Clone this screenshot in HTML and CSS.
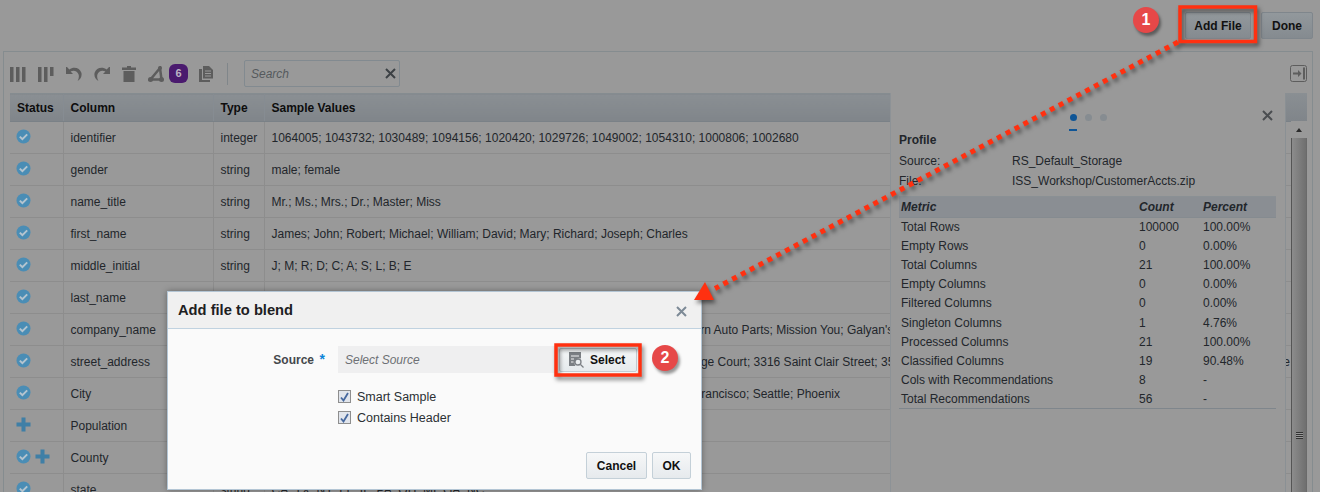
FILE: index.html
```html
<!DOCTYPE html>
<html>
  <head>
    <meta charset="UTF-8" />
    <meta name="viewport" content="width=device-width, initial-scale=1.0" />
    <title>Add file to blend</title>
    <link rel="stylesheet" href="styles.css">
  </head>
  <body>
    <svg class="defs" width="0" height="0">
      <symbol id="check" viewBox="0 0 15 15">
        <circle cx="7.5" cy="7.5" r="7" fill="#4a8db5" />
        <path d="M3.8 7.6l2.6 2.6 4.8-4.8" fill="none" stroke="#b4c4cf" stroke-width="2" />
      </symbol>
      <symbol id="plus" viewBox="0 0 15 15">
        <path d="M5.5 0.5h4v5h5v4h-5v5h-4v-5h-5v-4h5z" fill="#3f7fa6" />
      </symbol>
      <symbol id="cross" viewBox="0 0 11 11">
        <path d="M1 1l9 9M10 1l-9 9" fill="none" stroke="currentColor" stroke-width="2" />
      </symbol>
    </svg>

    <header class="topbar">
      <button class="btn btn-add">Add File</button>
      <button class="btn btn-done">Done</button>
    </header>

    <section class="panel">
      <div class="toolbar">
        <svg class="tool tool-first" width="16" height="16" viewBox="0 0 16 16"><path d="M0 1h3.5v15H0zM6 1h3.5v15H6zM12 1h3.5v15H12z" /></svg>
        <svg class="tool" width="16" height="16" viewBox="0 0 16 16"><path d="M0 1h3.5v15H0zM6 1h3.5v15H6zM12 1h3.5v9H12z" /></svg>
        <svg class="tool" width="16" height="16" viewBox="0 0 16 16"><path d="M0 1v7h7L4.6 5.6C7.5 3.8 11.5 5 12.6 8.5c.6 2 .2 4.500-1 6.500 3-1.500 4.600-5 3.800-8.200C14 2 8 0 3.300 3.400L1 1z" /></svg>
        <svg class="tool" width="16" height="16" viewBox="0 0 16 16"><path d="M16 1v7H9l2.400-2.400C8.500 3.800 4.500 5 3.400 8.500c-.6 2-.2 4.500 1 6.500-3-1.500-4.600-5-3.800-8.200C2 2 8 0 12.700 3.400L15 1z" /></svg>
        <svg class="tool" width="14" height="16" viewBox="0 0 14 16"><path d="M5 0h4v1.500h5v2.500H0V1.500h5zM1.500 5h11v11h-11z" /></svg>
        <svg class="tool tool-angle" width="16" height="16" viewBox="0 0 16 16"><path d="M12 2L2.500 13.500h11z" fill="none" stroke="#5d5d5d" stroke-width="2.500" /><circle cx="2.500" cy="13.500" r="2.500" /><circle cx="13.500" cy="13.500" r="2.500" /><circle cx="12" cy="2" r="2" /></svg>
        <span class="count">6</span>
        <svg class="tool tool-copy" width="14" height="16" viewBox="0 0 14 16"><path d="M4 0h6l4 4v8.500H4zM0 3h3v11h8v2H0z" /><path d="M6 5h6M6 7.500h6M6 10h6" stroke="#999" /></svg>
        <span class="separator"></span>
        <div class="search">
          <span class="search-text">Search</span>
          <svg class="search-clear" width="11" height="11"><use href="#cross" /></svg>
        </div>
        <svg class="collapse" width="17" height="17" viewBox="0 0 17 17"><rect x="0.500" y="0.500" width="16" height="16" rx="2" fill="none" stroke="#5d5d5d" /><path d="M3 7.500h5V5l3.500 3.500L8 12V9.500H3z" fill="#5d5d5d" /><path d="M13 2.500h2v12h-2z" fill="#5d5d5d" /></svg>
      </div>

      <div class="grid-wrap">
        <div class="grid-clip">
          <table class="grid">
            <thead>
              <tr><th class="c-status">Status</th><th class="c-name">Column</th><th class="c-type">Type</th><th class="c-sample">Sample Values</th><th class="c-rest"></th></tr>
            </thead>
            <tbody>
              <tr><td class="st"><svg width="15" height="15"><use href="#check" /></svg></td><td>identifier</td><td>integer</td><td>1064005; 1043732; 1030489; 1094156; 1020420; 1029726; 1049002; 1054310; 1000806; 1002680</td><td class="rest"></td></tr>
              <tr><td class="st"><svg width="15" height="15"><use href="#check" /></svg></td><td>gender</td><td>string</td><td>male; female</td><td class="rest"></td></tr>
              <tr><td class="st"><svg width="15" height="15"><use href="#check" /></svg></td><td>name_title</td><td>string</td><td>Mr.; Ms.; Mrs.; Dr.; Master; Miss</td><td class="rest"></td></tr>
              <tr><td class="st"><svg width="15" height="15"><use href="#check" /></svg></td><td>first_name</td><td>string</td><td>James; John; Robert; Michael; William; David; Mary; Richard; Joseph; Charles</td><td class="rest"></td></tr>
              <tr><td class="st"><svg width="15" height="15"><use href="#check" /></svg></td><td>middle_initial</td><td>string</td><td>J; M; R; D; C; A; S; L; B; E</td><td class="rest"></td></tr>
              <tr><td class="st"><svg width="15" height="15"><use href="#check" /></svg></td><td>last_name</td><td>string</td><td>Smith; Johnson; Williams; Jones; Brown; Davis; Miller; Wilson; Moore; Taylor</td><td class="rest"></td></tr>
              <tr><td class="st"><svg width="15" height="15"><use href="#check" /></svg></td><td>company_name</td><td>string</td><td>Sears Hometown; Bed Bath Inc.; Ace Hardware; Whole Foods; Pep Boys; Western Auto Parts; Mission You; Galyan's; Hechinger</td><td class="rest"></td></tr>
              <tr><td class="st"><svg width="15" height="15"><use href="#check" /></svg></td><td>street_address</td><td>string</td><td>4421 Lawton Avenue; 1882 Oak Park Drive; 2209 Ridge Road; 718 Sunset Cottage Court; 3316 Saint Clair Street; 3540 Woodland Terrace</td><td class="rest">e</td></tr>
              <tr><td class="st"><svg width="15" height="15"><use href="#check" /></svg></td><td>City</td><td>string</td><td>New York; Los Angeles; Chicago; Houston; Dallas; Boston; Waco; Denver; San Francisco; Seattle; Phoenix</td><td class="rest"></td></tr>
              <tr><td class="st"><svg width="15" height="15"><use href="#plus" /></svg></td><td>Population</td><td>integer</td><td>8175133; 3792621; 2695598</td><td class="rest"></td></tr>
              <tr><td class="st"><svg width="15" height="15"><use href="#check" /></svg><svg class="st-plus" width="15" height="15"><use href="#plus" /></svg></td><td>County</td><td>string</td><td>Kings; Queens; Cook; Harris</td><td class="rest"></td></tr>
              <tr><td class="st"><svg width="15" height="15"><use href="#check" /></svg></td><td>state</td><td>string</td><td>CA; TX; NY; FL; IL; PA; OH; MI; GA; NC</td><td class="rest"></td></tr>
            </tbody>
          </table>
        </div>

        <div class="scrollbar">
          <div class="scroll-head"></div>
          <span class="scroll-up"></span>
          <div class="scroll-thumb"><span class="grip"></span></div>
        </div>

        <aside class="profile">
          <div class="dots">
            <span class="dot dot-on"></span><span class="dot"></span><span class="dot"></span>
          </div>
          <span class="dot-mark"></span>
          <svg class="profile-close" width="11" height="11"><use href="#cross" /></svg>
          <h3>Profile</h3>
          <div class="meta"><span>Source:</span><span>RS_Default_Storage</span></div>
          <div class="meta"><span>File:</span><span>ISS_Workshop/CustomerAccts.zip</span></div>
          <table class="metrics">
            <thead><tr><th>Metric</th><th>Count</th><th>Percent</th></tr></thead>
            <tbody>
              <tr><td>Total Rows</td><td>100000</td><td>100.00%</td></tr>
              <tr><td>Empty Rows</td><td>0</td><td>0.00%</td></tr>
              <tr><td>Total Columns</td><td>21</td><td>100.00%</td></tr>
              <tr><td>Empty Columns</td><td>0</td><td>0.00%</td></tr>
              <tr><td>Filtered Columns</td><td>0</td><td>0.00%</td></tr>
              <tr><td>Singleton Columns</td><td>1</td><td>4.76%</td></tr>
              <tr><td>Processed Columns</td><td>21</td><td>100.00%</td></tr>
              <tr><td>Classified Columns</td><td>19</td><td>90.48%</td></tr>
              <tr><td>Cols with Recommendations</td><td>8</td><td>-</td></tr>
              <tr><td>Total Recommendations</td><td>56</td><td>-</td></tr>
            </tbody>
          </table>
        </aside>
      </div>
    </section>

    <div class="dialog">
      <div class="dialog-head">
        <h2>Add file to blend</h2>
        <svg class="dialog-close" width="11" height="11"><use href="#cross" /></svg>
      </div>
      <div class="dialog-body">
        <div class="source-row">
          <span class="source-label">Source</span>
          <span class="required">*</span>
          <div class="source-input">
            <span>Select Source</span>
            <button class="btn-select">
              <svg width="15" height="16" viewBox="0 0 15 16"><path d="M0 0h12v6.500a5 5 0 0 0-5.500 7.500H0z" fill="#7b7f84" /><path d="M2 4h8M2 7h3M2 10h2.500" stroke="#f2f2f2" /><circle cx="9" cy="10" r="3" fill="none" stroke="#7b7f84" stroke-width="1.300" /><path d="M11.500 12.500l3 3" stroke="#7b7f84" stroke-width="1.300" /></svg>
              Select
            </button>
          </div>
        </div>
        <label class="check-row"><span class="checkbox"><svg width="9" height="10" viewBox="0 0 9 10"><path d="M1 5.500l2.500 3L8 1" fill="none" stroke="#46689e" stroke-width="1.800" /></svg></span>Smart Sample</label>
        <label class="check-row"><span class="checkbox"><svg width="9" height="10" viewBox="0 0 9 10"><path d="M1 5.500l2.500 3L8 1" fill="none" stroke="#46689e" stroke-width="1.800" /></svg></span>Contains Header</label>
      </div>
      <div class="dialog-foot">
        <button class="btn-light btn-cancel">Cancel</button>
        <button class="btn-light btn-ok">OK</button>
      </div>
    </div>

    <!-- callouts drawn over the screenshot -->
    <svg class="callouts" width="1320" height="492">
      <g class="shadowed">
        <path d="M1178 42L715 288.500" fill="none" stroke="#ff3010" stroke-width="5" stroke-dasharray="5 5" />
        <path d="M705 282L714 300H694z" fill="#ff3010" />
        <rect x="1180" y="7" width="75.500" height="34.500" fill="none" stroke="#ff3010" stroke-width="3.500" />
        <rect x="556" y="345" width="84" height="30" fill="none" stroke="#ff3010" stroke-width="3.500" />
      </g>
    </svg>
    <span class="step step-1">1</span>
    <span class="step step-2">2</span>
  </body>
</html>
```

FILE: styles.css
```css
* {
  box-sizing: border-box;
  margin: 0;
  padding: 0;
}

html,
body {
  height: 492px;
  overflow: hidden;
}

body {
  position: relative;
  background-color: #999;
  color: #22262b;
  font-family: "Liberation Sans", Arial, sans-serif;
  font-size: 12px;
}

.defs {
  position: absolute;
}

button {
  font-family: inherit;
}

/* top bar */
.topbar {
  display: flex;
  justify-content: flex-end;
  gap: 10px;
  height: 51px;
  padding: 12px 7px 0 0;
}

.btn {
  height: 27px;
  border: 1px solid #7f868c;
  border-radius: 2px;
  background: linear-gradient(#92989c, #858b90);
  color: #111;
  font-size: 12px;
  font-weight: bold;
}

.btn-add {
  width: 66px;
}

.btn-done {
  width: 52px;
}

/* main panel */
.panel {
  margin: 0 7px 0 3px;
  height: 441px;
  padding: 0 5px 0 6px;
  border: 1px solid #858c8f;
  border-bottom: none;
}

.toolbar {
  display: flex;
  align-items: center;
  height: 41px;
  padding-top: 2px;
}

.tool {
  fill: #5d5d5d;
  margin-right: 12px;
}

.tool-angle {
  margin-right: 5px;
}

.count {
  width: 19px;
  height: 19px;
  margin-right: 11px;
  border-radius: 6px;
  background-color: #4a1a6e;
  color: #bcb4c4;
  font-size: 11px;
  font-weight: bold;
  line-height: 19px;
  text-align: center;
}

.tool-copy {
  margin-right: 0;
}

.separator {
  width: 1px;
  height: 22px;
  margin: 0 16px 0 14px;
  background-color: #80868a;
}

.search {
  display: flex;
  align-items: center;
  justify-content: space-between;
  width: 156px;
  height: 27px;
  padding: 0 3px 0 6px;
  border: 1px solid #828a90;
  border-radius: 2px;
  color: #55595d;
  font-style: italic;
}

.search-clear {
  color: #3c4145;
}

.collapse {
  margin-left: auto;
}

.grid-wrap {
  position: relative;
  height: 399px;
}

.grid-clip {
  width: 1281px;
  height: 399px;
  overflow: hidden;
}

.grid {
  width: 1281px;
  table-layout: fixed;
  border-collapse: collapse;
}

.grid th {
  height: 28px;
  padding: 0 7px;
  border-top: 1px solid #858c90;
  border-bottom: 1px solid #7a8187;
  border-left: 1px solid #868c92;
  background: linear-gradient(#8a8f93, #80858a);
  color: #0d0d0d;
  font-weight: bold;
  text-align: left;
}

.grid th:first-child,
.grid td:first-child {
  border-left: none;
}

.c-status {
  width: 53px;
}

.c-name {
  width: 150px;
}

.c-type {
  width: 51px;
}

.c-sample {
  width: 626px;
}

.grid .c-rest {
  border-left: none;
}

.grid td {
  height: 32px;
  padding: 0 7px;
  border-bottom: 1px solid #8d8d8d;
  border-left: 1px solid #8d8d8d;
  white-space: nowrap;
  overflow: hidden;
}

.grid .rest {
  padding: 0 1px 0 0;
  border-left: none;
  text-align: right;
}

.grid .st {
  padding: 0 0 3px 6px;
}

.grid .st svg {
  display: inline-block;
  vertical-align: middle;
}

.st-plus {
  margin-left: 4px;
}

/* scrollbar */
.scrollbar {
  position: absolute;
  top: 0;
  right: 0;
  width: 22px;
  height: 399px;
  padding-left: 6px;
  overflow: hidden;
}

.scroll-head {
  height: 28px;
  margin-left: -6px;
  background: linear-gradient(#8a8f93, #80858a);
}

.scroll-up {
  display: block;
  width: 0;
  height: 0;
  margin: 7px auto 0;
  border: 3px solid transparent;
  border-top: none;
  border-bottom: 4px solid #2c2c2c;
}

.scroll-thumb {
  display: flex;
  align-items: center;
  justify-content: center;
  height: 594px;
  margin-top: 6px;
  border-left: 1px solid #555;
  border-right: 1px solid #6a6a6a;
  background: linear-gradient(90deg, #8c8c8c, #6f6f6f);
}

.grip {
  width: 7px;
  height: 7px;
  border-top: 1px solid #333;
  border-bottom: 1px solid #333;
  background: linear-gradient(#999 1px, #333 1px, #333 2px, #999 2px, #999 3px, #333 3px, #333 4px, #999 4px);
}

/* profile popup */
.profile {
  position: absolute;
  top: 0;
  left: 880px;
  width: 396px;
  height: 399px;
  padding: 37px 9px 0 8px;
  border-left: 1px solid #8d9296;
  border-right: 1px solid #8a9094;
  background-color: #999;
}

.dots {
  display: flex;
  justify-content: center;
  gap: 8px;
  position: absolute;
  top: 21px;
  left: 179px;
}

.dot {
  width: 7px;
  height: 7px;
  border-radius: 50%;
  background-color: #868c91;
}

.dot-on {
  background-color: #0f5596;
}

.dot-mark {
  position: absolute;
  top: 36px;
  left: 178px;
  width: 8px;
  height: 2px;
  background-color: #0f5596;
}

.profile-close {
  position: absolute;
  top: 17px;
  right: 12px;
  color: #4a4d50;
}

.profile h3 {
  height: 21px;
  font-size: 12px;
  font-weight: bold;
  line-height: 20px;
}

.meta {
  display: grid;
  grid-template-columns: 113px 1fr;
  height: 20px;
  line-height: 20px;
}

.metrics {
  width: 377px;
  margin-top: 5px;
  table-layout: fixed;
  border-collapse: collapse;
  border-bottom: 1px solid #7f868c;
}

.metrics th {
  height: 21px;
  padding: 0 2px;
  border-top: 1px solid #8a9094;
  border-bottom: 1px solid #858b90;
  background-color: #8a8e93;
  font-style: italic;
  text-align: left;
}

.metrics td {
  height: 19.100px;
  padding: 0 2px;
}

.metrics th:nth-child(1) {
  width: 238px;
}

.metrics th:nth-child(2) {
  width: 64px;
}

/* dialog */
.dialog {
  position: absolute;
  top: 291px;
  left: 167px;
  display: flex;
  flex-direction: column;
  width: 535px;
  height: 199px;
  border: 1px solid #b3c5d4;
  background-color: #fafafa;
  box-shadow: 0 0 6px rgba(0, 0, 0, 0.35);
  color: #26292c;
}

.dialog-head {
  display: flex;
  align-items: center;
  justify-content: space-between;
  height: 37px;
  padding: 0 14px 0 10px;
  border-bottom: 1px solid #c0d2e0;
  background-color: #f0f0f0;
}

.dialog-head h2 {
  color: #1d2022;
  font-size: 14.700px;
  font-weight: bold;
}

.dialog-close {
  margin-top: 2px;
  color: #7d8a96;
}

.dialog-body {
  flex: 1;
  padding: 17px 0 0 170px;
}

.source-row {
  position: relative;
  margin-bottom: 13px;
}

.source-label {
  position: absolute;
  top: 7px;
  right: 100%;
  margin-right: 24px;
  color: #44484c;
  font-weight: bold;
}

.required {
  position: absolute;
  top: 5px;
  right: 100%;
  margin-right: 13px;
  color: #0a84d8;
  font-size: 14px;
  font-weight: bold;
}

.source-input {
  display: flex;
  align-items: center;
  justify-content: space-between;
  width: 300px;
  height: 27px;
  padding: 0 0 0 7px;
  color: #6d7074;
  font-style: italic;
  background: linear-gradient(90deg, #efeff0 217px, transparent 217px);
}

.btn-select {
  display: flex;
  align-items: center;
  gap: 6px;
  width: 78px;
  height: 24px;
  margin-right: 1px;
  padding-left: 9px;
  border: 1px solid #c4ced6;
  border-radius: 2px;
  background: linear-gradient(#f4f6f7, #e6eaed);
  color: #111;
  font-size: 12px;
  font-weight: bold;
}

.check-row {
  display: flex;
  align-items: center;
  gap: 6px;
  height: 21px;
  color: #2b3034;
  font-size: 12.500px;
}

.checkbox {
  display: flex;
  align-items: center;
  justify-content: center;
  width: 13px;
  height: 13px;
  border: 1px solid #8e8e8e;
  background-color: #e1e5ec;
}

.dialog-foot {
  display: flex;
  justify-content: flex-end;
  gap: 5px;
  padding: 0 10px 10px 0;
}

.btn-light {
  height: 27px;
  border: 1px solid #c4d0d8;
  border-radius: 2px;
  background: linear-gradient(#f6f7f8, #e6eaed);
  color: #111;
  font-size: 12px;
  font-weight: bold;
}

.btn-cancel {
  width: 61px;
}

.btn-ok {
  width: 39px;
}

/* callouts */
.callouts {
  position: absolute;
  top: 0;
  left: 0;
  pointer-events: none;
}

.shadowed {
  filter: drop-shadow(2px 3px 2px rgba(0, 0, 0, 0.5));
}

.step {
  position: absolute;
  width: 26px;
  height: 26px;
  border-radius: 50%;
  background-color: #e64848;
  box-shadow: 2px 3px 3px rgba(0, 0, 0, 0.4);
  color: #fff;
  font-size: 16px;
  font-weight: bold;
  line-height: 26px;
  text-align: center;
}

.step-1 {
  top: 7px;
  left: 1133px;
}

.step-2 {
  top: 345px;
  left: 652px;
}
```
